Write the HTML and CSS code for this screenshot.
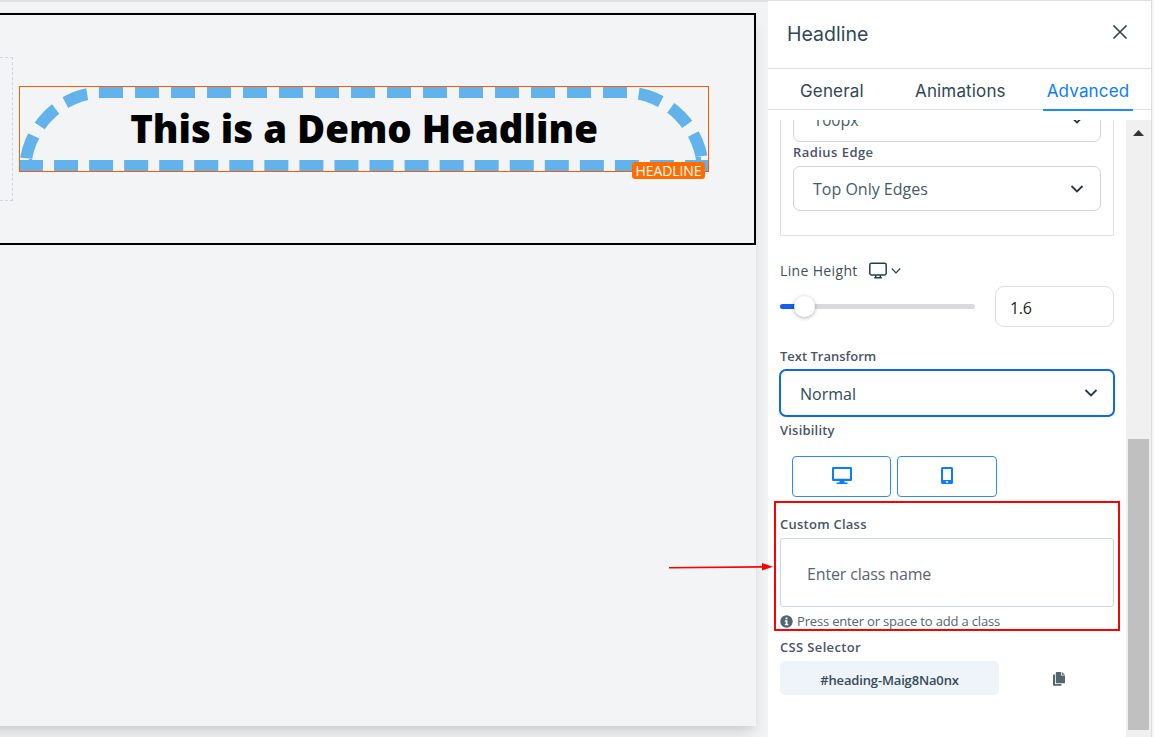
FILE: index.html
```html
<!DOCTYPE html>
<html lang="en">
<head>
    <meta charset="UTF-8">
    <meta name="viewport" content="width=device-width, initial-scale=1.0">
    <title>Headline Settings</title>
    <link rel="stylesheet" href="styles.css">
</head>
<body>

    <main class="workspace">
        <div class="canvas">
            <section class="section">
                <div class="empty-column"></div>
                <div class="headline-box">
                    <h1>This is a Demo Headline</h1>
                    <span class="headline-tag">HEADLINE</span>
                </div>
            </section>
        </div>
    </main>

    <aside class="panel">
        <header class="panel-header">
            <h2>Headline</h2>
            <svg class="close" width="16" height="16" viewBox="0 0 16 16"><path d="M1.5 1.5l13 13M14.5 1.5l-13 13"/></svg>
        </header>
        <nav class="tabs">
            <a class="tab tab-general">General</a>
            <a class="tab tab-animations">Animations</a>
            <a class="tab tab-active">Advanced</a>
        </nav>

        <div class="panel-body">
            <div class="settings">
                <div class="group">
                    <div class="select select-cut">
                        <span>100px</span>
                        <svg class="chevron" width="14" height="10" viewBox="0 0 14 10"><path d="M1.5 2l5.5 5.5L12.5 2"/></svg>
                    </div>
                    <div class="label label-radius"><span>Radius Edge</span></div>
                    <div class="select">
                        <span>Top Only Edges</span>
                        <svg class="chevron" width="14" height="10" viewBox="0 0 14 10"><path d="M1.5 2l5.5 5.5L12.5 2"/></svg>
                    </div>
                </div>

                <div class="label label-line">
                    <span>Line Height</span>
                    <svg class="icon-screen" width="18" height="17" viewBox="0 0 18 17"><rect x=".8" y="1.3" width="16.4" height="11.6" rx="1.6"/><path d="M6.7 13v2.3M11.3 13v2.3M5.2 15.8h7.6"/></svg>
                    <svg class="icon-down" width="10" height="8" viewBox="0 0 10 8"><path d="M.8 1.5L5 5.8l4.2-4.3"/></svg>
                </div>
                <div class="slider-row">
                    <div class="slider"><div class="slider-fill"></div><div class="slider-knob"></div></div>
                    <div class="number"><span>1.6</span></div>
                </div>

                <div class="label label-transform"><span>Text Transform</span></div>
                <div class="select select-focus">
                    <span>Normal</span>
                    <svg class="chevron" width="14" height="10" viewBox="0 0 14 10"><path d="M1.5 2l5.5 5.5L12.5 2"/></svg>
                </div>

                <div class="label label-visibility"><span>Visibility</span></div>
                <div class="devices">
                    <button class="device device-desktop">
                        <svg width="20" height="18" viewBox="0 0 20 18"><path fill-rule="evenodd" d="M1.2 0h17.6q1.2 0 1.2 1.2v11.6q0 1.2-1.2 1.2H12.2l.5 1.5h2.8V17h-11v-1.5h2.8l.5-1.5H1.2Q0 14 0 12.8V1.2Q0 0 1.2 0zM2 2v9.8h16V2z"/></svg>
                    </button>
                    <button class="device">
                        <svg width="12" height="18" viewBox="0 0 12 18"><path fill-rule="evenodd" d="M1.5 0h9Q12 0 12 1.500v14q0 1.500-1.500 1.500h-9Q0 17 0 15.500v-14Q0 0 1.500 0zM2 2v11h8V2zM4.800 14.200v1.600h2.400v-1.600z"/></svg>
                    </button>
                </div>

                <div class="label label-custom"><span>Custom Class</span></div>
                <div class="class-input"><span>Enter class name</span></div>
                <div class="hint">
                    <svg width="13" height="13" viewBox="0 0 13 13"><circle cx="6.5" cy="6.5" r="6.2" fill="#52666f"/><path d="M5.500 2.400h2v1.800h-2zM4.800 5.300h2.700v3.700h.8v1.200H4.800V9h.8V6.500h-.8z" fill="#fff"/></svg>
                    <span>Press enter or space to add a class</span>
                </div>

                <div class="label label-css"><span>CSS Selector</span></div>
                <div class="selector-row">
                    <div class="chip"><span>#heading-Maig8Na0nx</span></div>
                    <svg class="copy" width="12" height="14" viewBox="0 0 12 14"><path d="M3.500 0H8v3.500h4V10.500q0 .7-.7.7H3.500q-.7 0-.7-.7V.7q0-.7.7-.7zM8.800 0L12 2.800H8.800zM0 3.200q0-.8.8-.8h1.200v9.600h6.500v.9q0 .8-.8.8H.8q-.8 0-.8-.8z" fill="#52666f"/></svg>
                </div>
            </div>

            <div class="scrollbar">
                <svg width="11" height="6" viewBox="0 0 11 6"><path d="M5.5 0L11 6H0z" fill="#333"/></svg>
                <div class="thumb"></div>
            </div>
        </div>
    </aside>

    <!-- callout over the custom class field -->
    <div class="callout"></div>
    <svg class="arrow" width="106" height="10" viewBox="0 0 106 10"><path d="M1 5.700L94 4.900" stroke="#f00" stroke-width="1.600"/><path d="M94 1l11 3.700L94 8.400z" fill="#f00"/></svg>

</body>
</html>
```
FILE: styles.css
```css
* {
    box-sizing: border-box;
}
body {
    margin: 0;
    width: 1154px;
    height: 737px;
    display: flex;
    overflow: hidden;
    background: #f5f5f6;
    font-family: "Open Sans", "Noto Sans", sans-serif;
    color: #33475b;
}
svg {
    display: block;
    flex: none;
    fill: none;
}
span {
    white-space: nowrap;
}

/* canvas */
.workspace {
    width: 768px;
    height: 737px;
    padding-top: 11px;
    overflow: hidden;
    background: #f2f3f5;
    border-top: 2px solid #e1e2e4;
}
.canvas {
    width: 796px;
    height: 713px;
    margin-left: -40px;
    padding-left: 40px;
    background: #f3f4f6;
    box-shadow: 0 10px 15px -3px rgba(0, 0, 0, 0.12), 0 4px 6px -2px rgba(0, 0, 0, 0.06);
}
.section {
    display: flex;
    height: 232px;
    border: 2px solid #000;
    border-left: none;
}
.empty-column {
    width: 13px;
    height: 144px;
    margin: 42px 6px 0 0;
    border: 1px dashed #d3d4e6;
    border-left: none;
}
.headline-box {
    position: relative;
    width: 690px;
    height: 86px;
    margin-top: 71px;
    border: 12px dashed #62b2ec;
    border-radius: 100px 100px 0 0;
}
.headline-box::after {
    content: "";
    position: absolute;
    inset: -12px;
    border: 1px solid #ff5a00;
}
h1 {
    margin: 0;
    font-size: 38.4px;
    font-weight: 800;
    line-height: 61px;
    text-align: center;
    color: #000;
    white-space: nowrap;
}
.headline-tag {
    position: absolute;
    z-index: 1;
    right: -8px;
    bottom: -19px;
    width: 73px;
    height: 17px;
    border-radius: 3px;
    background: #ff6d00;
    color: #fff;
    font-size: 14px;
    line-height: 18px;
    letter-spacing: -0.1px;
    text-align: center;
}

/* settings panel */
.panel {
    width: 384px;
    height: 737px;
    background: #fff;
    border-top: 1px solid #dfe0e2;
    border-right: 1px solid #dcdee1;
    display: flex;
    flex-direction: column;
}
.panel-header {
    display: flex;
    justify-content: space-between;
    height: 68px;
    padding: 0 23px 0 19px;
    border-bottom: 1px solid #dcdfe4;
}
h2 {
    margin: 0;
    font: 400 19.5px/67px Inter, sans-serif;
    color: #2f4854;
}
.close {
    margin-top: 23px;
    stroke: #2f4858;
    stroke-width: 1.7;
}
.tabs {
    display: flex;
    height: 41px;
    border-bottom: 1px solid #dcdfe4;
    font: 400 17px/45px Inter, sans-serif;
    letter-spacing: 0.15px;
    color: #2f4854;
}
.tab {
    height: 42px;
}
.tab-general {
    width: 115px;
    padding-left: 32px;
}
.tab-animations {
    width: 160px;
    padding-left: 32px;
}
.tab-active {
    width: 90px;
    color: #0a7cff;
    border-bottom: 2px solid #1a8cf5;
    text-align: center;
}
.panel-body {
    display: flex;
    justify-content: space-between;
    margin-top: 10px;
    height: 617px;
    overflow: hidden;
}
.settings {
    width: 334px;
    margin-left: 12px;
}
.group {
    height: 116px;
    padding: 0 12px;
    overflow: hidden;
    border: 1px solid #dcdfe4;
    border-top: none;
    border-radius: 0 0 2px 2px;
}
.select {
    display: flex;
    align-items: center;
    justify-content: space-between;
    height: 45px;
    padding: 0 16px 0 19px;
    border: 1px solid #d0d2dc;
    border-radius: 7px;
    font-size: 16px;
    color: #455c68;
}
.select-cut {
    margin-top: -23px;
}
.chevron {
    stroke: #27364a;
    stroke-width: 1.8;
}
.label {
    display: flex;
    align-items: center;
    height: 20px;
    font-size: 13px;
    font-weight: 600;
    color: #4a5468;
}
.label-radius {
    margin: 0 0 4px;
    letter-spacing: 0.45px;
}
.label-line {
    margin: 24px 0 6px;
    font-size: 14px;
    font-weight: 500;
    letter-spacing: 0.35px;
    color: #3c505c;
}
.icon-screen {
    margin-left: 11px;
    stroke: #20404a;
    stroke-width: 1.5;
}
.icon-down {
    margin-left: 4px;
    margin-top: 2px;
    stroke: #20404a;
    stroke-width: 1.2;
}
.slider-row {
    display: flex;
    align-items: center;
    justify-content: space-between;
    height: 41px;
}
.slider {
    display: flex;
    align-items: center;
    width: 195px;
    height: 5px;
    border-radius: 3px;
    background: #d9d9df;
}
.slider-fill {
    width: 18px;
    height: 5px;
    border-radius: 3px 0 0 3px;
    background: #1260f0;
}
.slider-knob {
    width: 21px;
    height: 21px;
    margin: 0 0 0 -4px;
    border-radius: 50%;
    background: #fff;
    box-shadow: 0 1px 4px rgba(0, 0, 0, 0.3);
}
.number {
    width: 119px;
    height: 41px;
    padding: 2px 0 0 14px;
    border: 1px solid #dddde4;
    border-radius: 9px;
    font-size: 16px;
    line-height: 39px;
    letter-spacing: -0.3px;
    color: #222;
}
.label-transform {
    margin: 19px 0 3px;
}
.select-focus {
    height: 48px;
    margin: 0 -1px;
    padding: 0 15px 0 19px;
    border: 2px solid #0d6ae0;
    color: #2f4a58;
}
.select-focus span {
    padding-top: 2px;
}
.label-visibility {
    margin: 3px 0 16px;
    letter-spacing: 0.2px;
}
.devices {
    display: flex;
    gap: 6px;
    margin-left: 12px;
}
.device {
    display: flex;
    align-items: center;
    justify-content: center;
    width: 100px;
    height: 41px;
    padding: 0 0 2px;
    border: 1px solid #2b8cf5;
    border-radius: 4px;
    background: #fff;
}
.device-desktop {
    width: 99px;
}
.device path {
    fill: #0a7cff;
}
.label-custom {
    margin: 17px 0 4px;
    letter-spacing: 0.25px;
}
.class-input {
    height: 69px;
    padding: 2px 0 0 26px;
    border: 1px solid #cbd6e2;
    border-radius: 3px;
    font-size: 16px;
    line-height: 66px;
    letter-spacing: -0.15px;
    color: #5a6474;
}
.hint {
    display: flex;
    align-items: center;
    gap: 4px;
    height: 20px;
    margin-top: 4px;
    font-size: 13px;
    letter-spacing: -0.17px;
    color: #52666f;
}
.label-css {
    margin: 6px 0 4px;
    letter-spacing: 0.35px;
}
.selector-row {
    display: flex;
    align-items: center;
    gap: 54px;
}
.copy {
    margin-top: 2px;
}
.chip {
    width: 219px;
    height: 34px;
    padding-top: 2px;
    border-radius: 5px;
    background: #eef4f9;
    font-size: 13px;
    font-weight: 600;
    line-height: 35px;
    letter-spacing: -0.15px;
    text-align: center;
    color: #344b57;
}
.scrollbar {
    display: flex;
    flex-direction: column;
    align-items: center;
    width: 25px;
    padding-top: 10px;
    background: #f0f0f0;
}
.thumb {
    width: 21px;
    height: 291px;
    margin-top: 303px;
    background: #c0c0c0;
}

.callout {
    position: absolute;
    left: 774px;
    top: 501px;
    width: 346px;
    height: 130px;
    border: 2px solid #f00;
}
.arrow {
    position: absolute;
    left: 668px;
    top: 562px;
}
```
